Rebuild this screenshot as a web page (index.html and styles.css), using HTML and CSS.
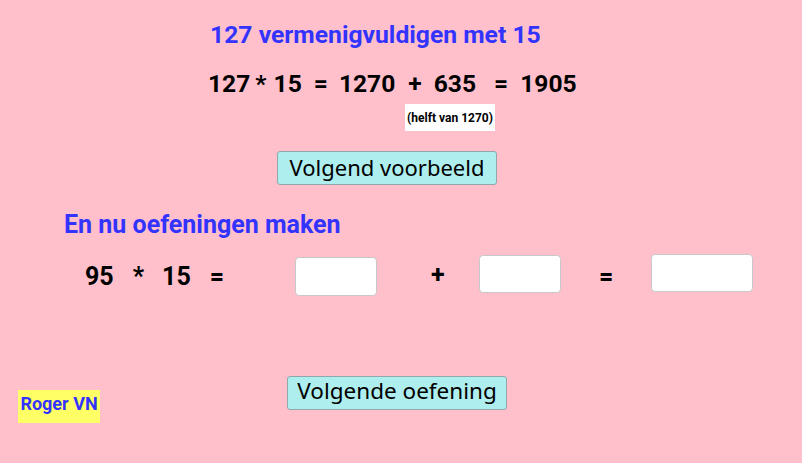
FILE: index.html
```html
<!DOCTYPE html>
<html>
<head>
<meta charset="utf-8">
<link rel="stylesheet" href="styles.css">
</head>
<body>
<div class="canvas">
  <div class="title">127 vermenigvuldigen met 15</div>
  <div class="equation">
    <span class="e1">127</span>
    <span class="e2">*</span>
    <span class="e3">15</span>
    <span class="e4">=</span>
    <span class="e5">1270</span>
    <span class="e6">+</span>
    <span class="e7">635</span>
    <span class="e8">=</span>
    <span class="e9">1905</span>
  </div>
  <div class="note">(helft van 1270)</div>
  <button class="btn btn-example">Volgend voorbeeld</button>
  <div class="subtitle">En nu oefeningen maken</div>
  <div class="exercise">
    <span class="x1">95</span>
    <span class="x2">*</span>
    <span class="x3">15</span>
    <span class="x4">=</span>
  </div>
  <div class="input in1"></div>
  <div class="op op-plus">+</div>
  <div class="input in2"></div>
  <div class="op op-eq">=</div>
  <div class="input in3"></div>
  <button class="btn btn-next">Volgende oefening</button>
  <div class="author">Roger VN</div>
</div>
</body>
</html>
```

FILE: styles.css
```css
html, body {
  margin: 0;
  padding: 0;
}
body {
  background: #ffc0cb;
  font-family: Roboto, "Liberation Sans", sans-serif;
}
.canvas {
  position: relative;
  width: 802px;
  height: 463px;
  overflow: hidden;
  background: #ffc0cb;
}
.title, .equation, .note, .subtitle, .exercise, .op, .author, .input, .btn {
  position: absolute;
}
.title {
  left: 210px;
  top: 23px;
  font-size: 24.7px;
  line-height: 1;
  font-weight: 700;
  color: #3333ff;
  white-space: nowrap;
}
.equation {
  left: 208px;
  top: 72px;
  font-size: 24.6px;
  line-height: 1;
  font-weight: 700;
  color: #000;
  display: flex;
  white-space: nowrap;
}
.equation span, .exercise span { display: block; }
.e2 { margin-left: 5px; }
.e3 { margin-left: 7px; }
.e4 { margin-left: 12px; }
.e5 { margin-left: 11px; }
.e6 { margin-left: 13px; }
.e7 { margin-left: 12px; }
.e8 { margin-left: 18px; }
.e9 { margin-left: 12px; }
.note {
  left: 405px;
  top: 104px;
  width: 90px;
  height: 27px;
  background: #fff;
  font-size: 12px;
  font-weight: 700;
  color: #000;
  display: flex;
  align-items: center;
  justify-content: center;
  white-space: nowrap;
}
.btn {
  margin: 0;
  padding: 0 0 3px 0;
  box-sizing: border-box;
  background: #afeeee;
  border: 1px solid #8fa8ac;
  border-radius: 3px;
  font-family: "Noto Sans", "Open Sans", sans-serif;
  font-size: 22px;
  line-height: 1;
  color: #000;
  display: flex;
  align-items: center;
  justify-content: center;
  white-space: nowrap;
}
.btn-example {
  left: 277px;
  top: 151px;
  width: 220px;
  height: 34px;
}
.btn-next {
  left: 287px;
  top: 376px;
  width: 220px;
  height: 34px;
  font-size: 22.5px;
}
.subtitle {
  left: 64px;
  top: 212px;
  font-size: 25px;
  line-height: 1;
  font-weight: 700;
  color: #3333ff;
  white-space: nowrap;
}
.exercise {
  left: 85px;
  top: 264px;
  font-size: 25px;
  line-height: 1;
  font-weight: 700;
  display: flex;
}
.x2 { margin-left: 19px; }
.x3 { margin-left: 18px; }
.x4 { margin-left: 19px; }
.input {
  background: #fff;
  border: 1px solid #c8c8c8;
  border-radius: 4px;
  box-sizing: border-box;
}
.in1 { left: 295px; top: 257px; width: 82px; height: 39px; }
.in2 { left: 479px; top: 255px; width: 82px; height: 38px; }
.in3 { left: 651px; top: 254px; width: 102px; height: 38px; }
.op {
  font-size: 25px;
  line-height: 1;
  font-weight: 700;
}
.op-plus { left: 431px; top: 262px; }
.op-eq { left: 599px; top: 264px; }
.author {
  left: 18px;
  top: 390px;
  width: 82px;
  height: 33px;
  box-sizing: border-box;
  padding-bottom: 5px;
  background: #ffff66;
  color: #3333ff;
  font-size: 18px;
  line-height: 1;
  font-weight: 700;
  display: flex;
  align-items: center;
  justify-content: center;
}
```
